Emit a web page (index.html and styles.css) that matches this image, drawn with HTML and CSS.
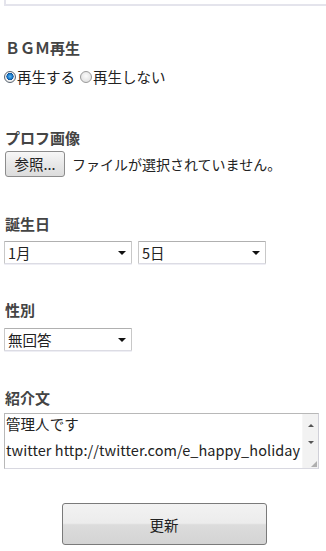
FILE: index.html
```html
<!DOCTYPE html>
<html lang="ja">
<head>
<meta charset="utf-8">
<title>プロフィール編集</title>
<link rel="stylesheet" href="styles.css">
</head>
<body>
<div class="prev-field"></div>

<div class="field field-bgm">
  <div class="label">ＢＧＭ再生</div>
  <div class="radio-row">
    <label class="radio"><input type="radio" name="bgm" checked><span>再生する</span></label>
    <label class="radio"><input type="radio" name="bgm"><span>再生しない</span></label>
  </div>
</div>

<div class="field field-image">
  <div class="label">プロフ画像</div>
  <div class="file-row">
    <button class="file-btn" type="button">参照...</button>
    <span class="file-text">ファイルが選択されていません。</span>
  </div>
</div>

<div class="field field-birth">
  <div class="label">誕生日</div>
  <div class="select-row">
    <div class="select-wrap"><select class="select"><option>1月</option></select></div>
    <div class="select-wrap"><select class="select"><option>5日</option></select></div>
  </div>
</div>

<div class="field field-sex">
  <div class="label">性別</div>
  <div class="select-row">
    <div class="select-wrap"><select class="select"><option>無回答</option></select></div>
  </div>
</div>

<div class="field field-intro">
  <div class="label">紹介文</div>
  <div class="textarea-box">
    <textarea class="textarea">管理人です
twitter http://twitter.com/e_happy_holiday</textarea>
    <div class="scrollbar">
      <span class="arrow arrow-up"></span>
      <span class="arrow arrow-down"></span>
      <span class="grip"></span>
    </div>
  </div>
</div>

<div class="submit-row">
  <button class="submit" type="button">更新</button>
</div>
</body>
</html>
```

FILE: styles.css
```css
html, body {
  margin: 0;
  padding: 0;
  background: #fff;
  overflow: hidden;
}
body {
  width: 326px;
  height: 551px;
  font-family: "Noto Sans CJK JP", "Noto Sans", sans-serif;
  font-size: 14px;
  color: #222;
  display: flex;
  flex-direction: column;
}
.prev-field {
  height: 4px;
  margin-left: 4px;
  border: 2px solid #e4e4ec;
  border-top: none;
  border-right: none;
}
.field {
  display: flex;
  flex-direction: column;
  padding-left: 4px;
}
.label {
  font-weight: bold;
  font-size: 15px;
  color: #444;
  line-height: 20px;
  height: 20px;
  padding-left: 1px;
}
.field-bgm { margin-top: 32px; }
.field-image { margin-top: 40px; }
.field-birth { margin-top: 37px; }
.field-sex { margin-top: 36px; }
.field-intro { margin-top: 37px; }

.radio-row {
  margin-top: 8px;
  height: 22px;
  display: flex;
  align-items: center;
  gap: 5px;
  line-height: 22px;
  font-size: 14.5px;
}
.radio {
  display: flex;
  align-items: center;
  gap: 1px;
}
.radio input {
  appearance: none;
  -webkit-appearance: none;
  margin: 0;
  width: 12px;
  height: 12px;
  border-radius: 50%;
  border: 1px solid #9a9a9a;
  background: radial-gradient(circle at 50% 40%, #fbfbfb 0, #e4e4e4 70%, #d0d0d0 100%);
  box-sizing: border-box;
}
.radio input:checked {
  border-color: #5a6470;
  background: radial-gradient(circle at 50% 45%, #5fb8f0 0, #1a78c8 2.5px, #0b4f96 3.4px, #f4f4f4 3.8px, #e0e0e0 100%);
}

.file-row {
  margin-top: 3px;
  display: flex;
  align-items: center;
  gap: 7px;
}
.file-btn {
  font-family: inherit;
  font-size: 14.5px;
  color: #222;
  width: 60px;
  height: 26px;
  padding: 0;
  margin-left: 1px;
  border: 1px solid #8c8c8c;
  border-radius: 3px;
  background: linear-gradient(#f7f7f7, #e8e8e8 50%, #dcdcdc);
  line-height: 22px;
}
.file-text {
  color: #222;
  line-height: 20px;
}

.select-row {
  margin-top: 7px;
  display: flex;
  gap: 6px;
}
.field-sex .select-row { margin-top: 8px; }
.select-wrap {
  position: relative;
  width: 128px;
  height: 23px;
}
.select-wrap::after {
  content: "";
  position: absolute;
  right: 6px;
  top: 10px;
  border-left: 4px solid transparent;
  border-right: 4px solid transparent;
  border-top: 4px solid #111;
  pointer-events: none;
}
.select {
  appearance: none;
  -webkit-appearance: none;
  width: 100%;
  height: 100%;
  margin: 0;
  padding: 0 0 0 3px;
  font-family: inherit;
  font-size: 14.5px;
  color: #222;
  background: #fff;
  border: 1px solid #c8c8c8;
  border-top-color: #b0b0b0;
  border-bottom-color: #dcdce4;
  border-radius: 1px;
  box-shadow: 0 1px 0 #eeeef4;
  outline: none;
}

.textarea-box {
  margin-top: 5px;
  width: 313px;
  height: 54px;
  display: flex;
  border: 1px solid #b8b8b8;
  border-bottom-color: #d8d8e0;
  border-right-color: #d0d0d8;
  box-sizing: content-box;
  overflow: hidden;
}
.textarea {
  flex: 1;
  border: none;
  margin: -3px 0 0 0;
  padding: 0 0 0 1px;
  resize: none;
  overflow: hidden;
  font-family: inherit;
  font-size: 14.5px;
  letter-spacing: 0.05px;
  line-height: 26px;
  color: #222;
  background: #fff;
  outline: none;
  white-space: pre;
}
.scrollbar {
  position: relative;
  width: 15px;
  background: #f2f2f2;
  border-left: 1px solid #f6f6f6;
}
.arrow {
  position: absolute;
  left: 5px;
  border-left: 3px solid transparent;
  border-right: 3px solid transparent;
}
.arrow-up {
  top: 10px;
  border-bottom: 3px solid #555;
}
.arrow-down {
  top: 27px;
  border-top: 3px solid #555;
}
.grip {
  position: absolute;
  right: 1px;
  bottom: 1px;
  width: 6px;
  height: 6px;
  background:
    radial-gradient(circle, #aaa 0.7px, transparent 0.8px) 0 0 / 2px 2px;
  clip-path: polygon(100% 0, 100% 100%, 0 100%);
}

.submit-row {
  display: flex;
  justify-content: center;
  margin-top: 34px;
  padding-left: 2px;
}
.submit {
  width: 205px;
  height: 42px;
  font-family: inherit;
  font-size: 14.5px;
  color: #222;
  border: 1px solid #7a7a7a;
  border-radius: 3px;
  background: linear-gradient(#f2f2f2, #ececec 48%, #dcdcdc 52%, #d4d4d4);
  padding: 0;
}
```
